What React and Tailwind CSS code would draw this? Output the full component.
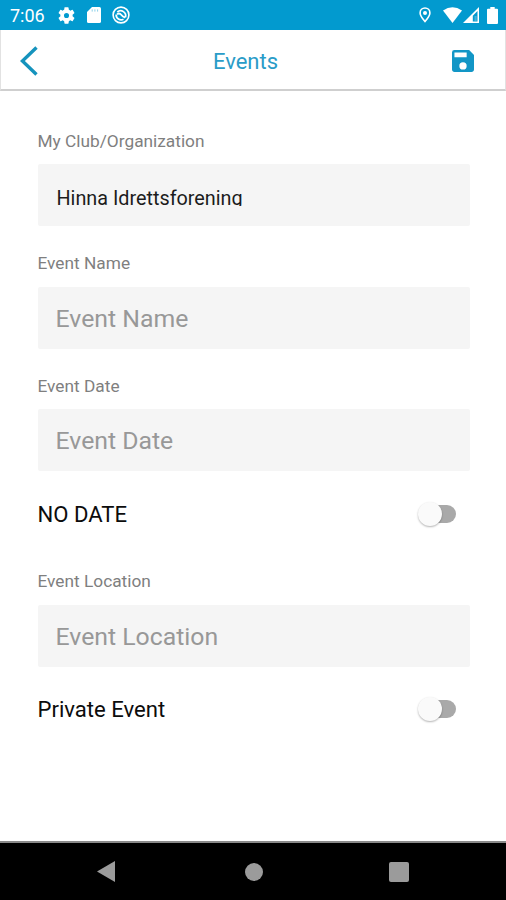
import { useState } from "react";

function StatusBar() {

  return (

    <div className="h-[30px] bg-[#029acf] text-white flex items-center justify-between pl-[10px] pr-[8px]">

      <div className="flex items-center">

        <span className="text-[18px] leading-[30px] w-[48px] pt-[2px] whitespace-nowrap">7:06</span>

        <svg viewBox="2 2 20 20" className="w-[17px] h-[17px]" fill="currentColor">
          <path d="M19.14 12.94c.04-.3.06-.61.06-.94s-.02-.64-.07-.94l2.03-1.58a.49.49 0 0 0 .12-.61l-1.92-3.32a.49.49 0 0 0-.59-.22l-2.39.96c-.5-.38-1.03-.7-1.62-.94l-.36-2.54A.48.48 0 0 0 13.92 2.4h-3.84c-.24 0-.43.17-.47.41l-.36 2.54c-.59.24-1.13.57-1.62.94l-2.39-.96a.49.49 0 0 0-.59.22L2.74 8.87a.48.48 0 0 0 .12.61l2.03 1.58c-.05.3-.09.63-.09.94s.02.64.07.94l-2.03 1.58a.49.49 0 0 0-.12.61l1.92 3.32c.12.22.37.29.59.22l2.39-.96c.5.38 1.03.7 1.62.94l.36 2.54c.05.24.24.41.48.41h3.84c.24 0 .44-.17.47-.41l.36-2.54c.59-.24 1.13-.56 1.62-.94l2.39.96c.22.08.47 0 .59-.22l1.92-3.32a.48.48 0 0 0-.12-.61zM12 15a3 3 0 1 1 0-6 3 3 0 0 1 0 6z" />
        </svg>

        <svg viewBox="0 0 14 16" className="w-[14px] h-[16px] ml-[12px]" fill="currentColor">
          <path d="M5 0h7.400Q14 0 14 1.600v12.800q0 1.600-1.600 1.600H1.600Q0 16 0 14.400V5z" />
          <path d="M5.200 2.400v2.200M7.900 2.400v2.200M10.600 2.400v2.200" stroke="#029acf" strokeWidth="1" opacity=".45" />
        </svg>

        <svg viewBox="0 0 18 18" className="w-[18px] h-[18px] ml-[11px]" fill="none" stroke="currentColor">
          <circle cx="9" cy="9" r="7.900" strokeWidth="1.600" />
          <path d="M5.300 6A5 5 0 0 1 13.300 11.500" strokeWidth="1.800" />
          <path d="M4.200 8.500A5 5 0 0 0 11.500 13.300" strokeWidth="1.800" />
          <path d="M5 8.200Q7.500 6.500 9.200 8.800T13 11.500" strokeWidth="1.800" />
        </svg>

      </div>

      <div className="flex items-center">

        <svg viewBox="0 0 12 16" className="w-[12px] h-[16px]" fill="none" stroke="currentColor">
          <path d="M6 14.600C3.500 11.500 1.100 8.600 1.100 5.900a4.900 4.900 0 0 1 9.800 0c0 2.700-2.400 5.600-4.900 8.700z" strokeWidth="1.600" />
          <circle cx="6" cy="5.900" r="2" fill="currentColor" stroke="none" />
        </svg>

        <svg viewBox="0 0 19 16" className="w-[19px] h-[16px] ml-[12px]" fill="currentColor">
          <path d="M0 3.600Q9.500-3 19 3.600L9.500 16z" />
        </svg>

        <svg viewBox="0 0 16 16" className="w-[16px] h-[16px] ml-[1px]" fill="currentColor">
          <path fillRule="evenodd" d="M16 0v16H0zM14.500 4 9.800 8.700v5.800h4.700z" />
          <path d="M11.500 9h2.200v5h-2.200z" opacity=".25" />
        </svg>

        <svg viewBox="0 0 11 17" className="w-[11px] h-[17px] ml-[8px]" fill="currentColor">
          <path d="M3.300 0h4.400v1.800H10q1 0 1 1V16q0 1-1 1H1q-1 0-1-1V2.800q0-1 1-1h2.300z" />
        </svg>

      </div>

    </div>
  );
}

function Header() {

  return (

    <div className="h-[61px] bg-white border-b-2 border-b-[#cfcfcf] border-l border-l-[#e2e2e2] border-r border-r-[#e2e2e2] flex items-center justify-between pl-[19px] pr-[31px] pt-[2px]">

      <button className="w-[22px]">
        <svg viewBox="0 0 18 30" className="w-[18px] h-[30px]" fill="none" stroke="#1593bd" strokeWidth="3.400">
          <path d="M16.500 1.500 2.400 15 16.500 28.500" />
        </svg>
      </button>

      <h1 className="text-[22px] leading-[26px] text-[#2a9cc8] whitespace-nowrap pt-[2px] mr-[3px]">
        Events
      </h1>

      <button>
        <svg viewBox="3 3 18 18" className="w-[22px] h-[22px]" fill="#1296c6">
          <path d="M17 3H5a2 2 0 0 0-2 2v14c0 1.100.9 2 2 2h14c1.100 0 2-.9 2-2V7l-4-4zm-5 16a3 3 0 1 1 0-6 3 3 0 0 1 0 6zm3-10H5V5h10v4z" />
        </svg>
      </button>

    </div>
  );
}

function Field({ label, placeholder, value }) {

  return (

    <div>

      <div className="text-[17.300px] leading-[20px] h-[33.400px] text-[#7f7f7f] whitespace-nowrap">
        {label}
      </div>

      <div className="h-[62px] bg-[#f5f5f5] rounded-[2px] px-[18px] whitespace-nowrap">

        {
          value ? (

            <div className="pt-[21px] pl-[1px] h-[42px] overflow-hidden text-[19.800px] leading-[28px] text-[#1c1c1c]">
              {value}
            </div>

          ) : (

            <div className="text-[24.800px] leading-[62px] pt-[1px] text-[#989898]">
              {placeholder}
            </div>

          )
        }

      </div>

    </div>
  );
}

function ToggleRow({ label }) {

  const [checked, setChecked] = useState(false);

  return (

    <div className="flex items-center justify-between h-[30px] pr-[14px]">

      <span className="text-[22.100px] leading-[30px] text-[#0c0c0c] whitespace-nowrap">
        {label}
      </span>

      <button
        onClick={() => setChecked(!checked)}
        className="w-[34px] h-[18px] rounded-full bg-[#a9a9a9] flex items-center"
      >
        <span
          className={
            checked
              ? "w-[24px] h-[24px] rounded-full bg-[#029acf] shrink-0 ml-[14px]"
              : "w-[24px] h-[24px] rounded-full bg-[#fafafa] shrink-0 -ml-[4px] shadow-[0_1px_2px_rgba(0,0,0,0.3)]"
          }
        />
      </button>

    </div>
  );
}

function NavBar() {

  return (

    <div className="h-[59px] bg-black border-t-2 border-[#8a8a8a] flex items-center justify-between pl-[97px] pr-[97px]">

      <svg viewBox="0 0 18 21" className="w-[18px] h-[21px]" fill="#9b9b9b">
        <path d="M18 0v21L0 10.500z" />
      </svg>

      <div className="w-[18px] h-[18px] rounded-full bg-[#9b9b9b] ml-[3px]" />

      <div className="w-[20px] h-[20px] rounded-[2px] bg-[#9b9b9b]" />

    </div>
  );
}

function App() {

  return (

    <div className="w-[506px] h-[900px] bg-white flex flex-col overflow-hidden font-['Roboto',sans-serif]">

      <StatusBar />

      <Header />

      {/* EVENT FORM */}

      <div className="flex-1 px-[37.500px] pr-[36px] pt-[40px]">

        <div className="flex flex-col gap-[27px]">
          <Field label="My Club/Organization" value="Hinna Idrettsforening" />
          <Field label="Event Name" placeholder="Event Name" />
          <Field label="Event Date" placeholder="Event Date" />
        </div>

        <div className="pt-[28px] pb-[42px]">
          <ToggleRow label="NO DATE" />
        </div>

        <Field label="Event Location" placeholder="Event Location" />

        <div className="pt-[27px]">
          <ToggleRow label="Private Event" />
        </div>

      </div>

      <NavBar />

    </div>
  );
}

export default App;
